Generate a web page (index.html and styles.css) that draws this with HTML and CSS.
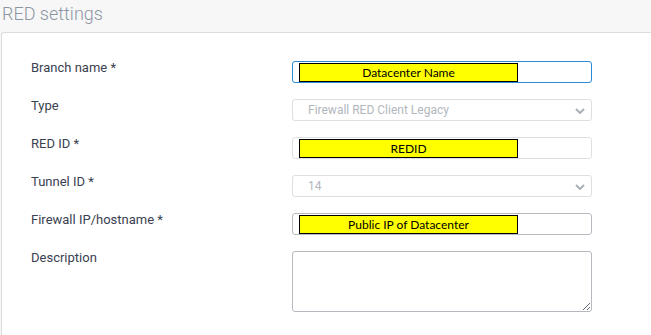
FILE: index.html
```html
<!DOCTYPE html>
<html lang="en">
  <head>
    <meta charset="UTF-8" />
    <title>RED settings</title>
    <link rel="stylesheet" href="styles.css">
  </head>
  <body>
    <h2 class="section-title">RED settings</h2>
    <div class="panel">
      <div class="form-grid">
        <label class="field-label">Branch name *</label>
        <div class="field field-focus">
          <span class="redact">Datacenter Name</span>
        </div>

        <label class="field-label">Type</label>
        <div class="field field-disabled">
          <span class="select-text">Firewall RED Client Legacy</span>
          <svg class="chevron" width="10" height="6" viewBox="0 0 10 6">
            <path d="M1 1l4 4 4-4" fill="none" stroke="#aab0b8" stroke-width="2" />
          </svg>
        </div>

        <label class="field-label">RED ID *</label>
        <div class="field field-light">
          <span class="redact">REDID</span>
        </div>

        <label class="field-label">Tunnel ID *</label>
        <div class="field field-disabled">
          <span class="select-text">14</span>
          <svg class="chevron" width="10" height="6" viewBox="0 0 10 6">
            <path d="M1 1l4 4 4-4" fill="none" stroke="#aab0b8" stroke-width="2" />
          </svg>
        </div>

        <label class="field-label">Firewall IP/hostname *</label>
        <div class="field">
          <span class="redact">Public IP of Datacenter</span>
        </div>

        <label class="field-label">Description</label>
        <textarea class="description"></textarea>
      </div>
    </div>
  </body>
</html>
```

FILE: styles.css
```css
body {
  margin: 0;
  padding: 0;
  background-color: #f7f7f7;
  font-family: Roboto, "Liberation Sans", sans-serif;
  overflow: hidden;
}

.section-title {
  margin: 0;
  padding: 0 0 0 2px;
  height: 32px;
  line-height: 28px;
  font-size: 18px;
  font-weight: 300;
  color: #8c96a3;
}

.panel {
  margin-left: 1px;
  background-color: #fff;
  border: 1px solid #dcdcdc;
  border-right: none;
  border-radius: 3px 0 0 0;
  padding: 28px 0 40px 0;
}

.form-grid {
  display: grid;
  grid-template-columns: 261px 300px;
  row-gap: 16px;
  padding-left: 29px;
  align-items: start;
}

.field-label {
  font-size: 13px;
  line-height: 14px;
  color: #3a4150;
}

.field {
  border: 1px solid #b5b9c0;
  border-radius: 3px;
  display: flex;
  align-items: flex-start;
  padding-left: 6px;
  padding-top: 1px;
  box-sizing: content-box;
  height: 19px;
}

.field-focus {
  border-color: #2a8ad4;
}

.field-light {
  border-color: #dcdfe3;
}

.field-disabled {
  border-color: #dcdfe3;
  align-items: center;
  justify-content: space-between;
  padding: 0 6px 0 15px;
  height: 20px;
}

.select-text {
  font-size: 12px;
  color: #b2b7be;
}

.chevron {
  margin-top: 1px;
}

.redact {
  width: 217px;
  height: 17px;
  background-color: #ffff00;
  border: 1px solid #000;
  font-family: Lato, "Liberation Sans", sans-serif;
  font-size: 12px;
  line-height: 17px;
  text-align: center;
  color: #000;
}

.description {
  width: 300px;
  height: 61px;
  box-sizing: border-box;
  margin: 0;
  border: 1px solid #b5b9c0;
  border-radius: 3px;
  resize: both;
}
```
